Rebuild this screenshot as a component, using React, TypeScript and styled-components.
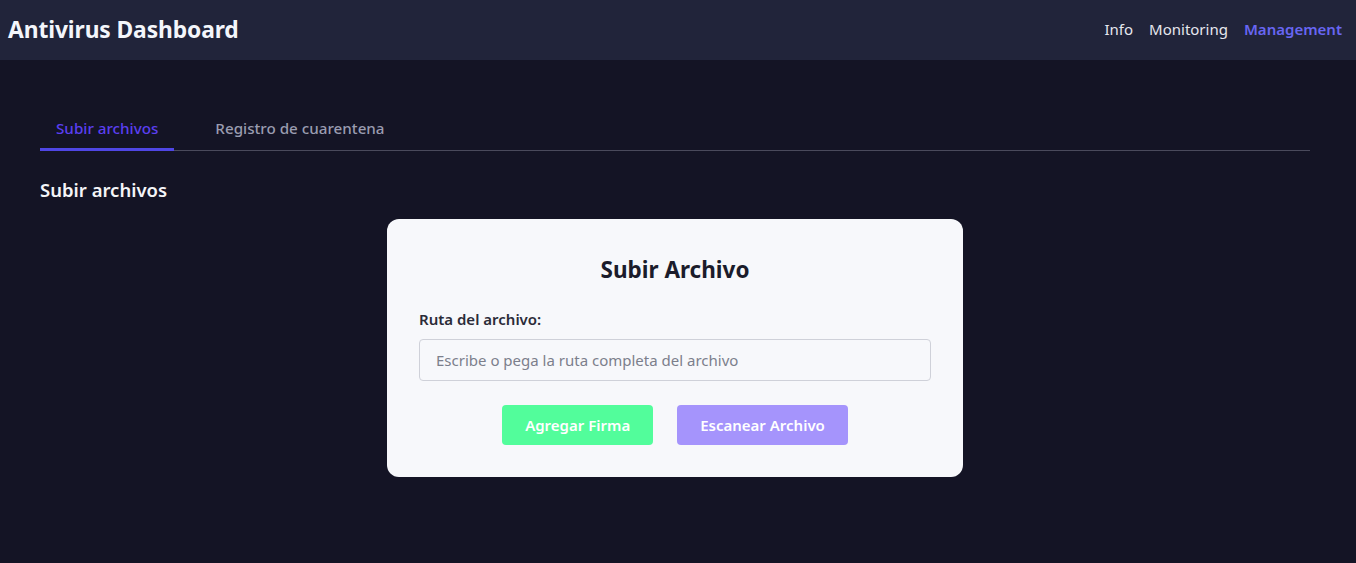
import React, { useState } from "react";
import styled, { createGlobalStyle } from "styled-components";

const Global = createGlobalStyle`
  html, body { margin: 0; padding: 0; background: #141425; }
  body { font-family: "Noto Sans", "Open Sans", sans-serif; color: #f1f2f6; }
  * { box-sizing: border-box; }
`;

const Page = styled.div`
  min-height: 563px;
  background: #141425;
`;

const Header = styled.header`
  height: 60px;
  background: #21243a;
  display: flex;
  align-items: center;
  justify-content: space-between;
  padding: 0 14px 2px 8px;
`;

const Brand = styled.h1`
  margin: 0;
  font-size: 22.8px;
  font-weight: 700;
  color: #f4f6fb;
  letter-spacing: -0.1px;
`;

const Nav = styled.nav`
  display: flex;
  gap: 16px;
`;

const NavLink = styled.a<{ $active?: boolean }>`
  font-size: 15px;
  color: ${(p) => (p.$active ? "#6866f2" : "#e6e7ee")};
  font-weight: ${(p) => (p.$active ? 600 : 400)};
  text-decoration: none;
  cursor: pointer;
`;

const Main = styled.main`
  padding: 56px 46px 0 40px;
`;

const TabList = styled.div`
  display: flex;
  gap: 25px;
  border-bottom: 1px solid #4a4a5c;
`;

const Tab = styled.button<{ $active?: boolean }>`
  background: none;
  border: none;
  font-family: inherit;
  font-size: 15.2px;
  font-weight: 500;
  padding: 2px 16px 10px;
  margin-bottom: -1px;
  cursor: pointer;
  color: ${(p) => (p.$active ? "#5b3ff0" : "#9a9cb0")};
  border-bottom: 3px solid ${(p) => (p.$active ? "#4f46e5" : "transparent")};
`;

const SectionTitle = styled.h2`
  margin: 26px 0 17px;
  font-size: 18.5px;
  font-weight: 600;
  color: #f4f5f8;
`;

const Center = styled.div`
  display: flex;
  justify-content: center;
`;

const Card = styled.div`
  width: 576px;
  background: #f7f8fb;
  border-radius: 12px;
  padding: 36px 32px 32px;
  display: flex;
  flex-direction: column;
`;

const CardTitle = styled.h3`
  margin: 0 0 24px;
  text-align: center;
  font-size: 22.5px;
  font-weight: 700;
  color: #1b1c2b;
  line-height: 30px;
`;

const Label = styled.label`
  font-size: 15px;
  font-weight: 600;
  color: #2a2b38;
  margin-bottom: 10px;
`;

const Input = styled.input`
  height: 42px;
  width: 100%;
  border: 1px solid #cfd1d9;
  border-radius: 4px;
  background: #f7f8fb;
  padding: 0 16px;
  font-family: inherit;
  font-size: 15px;
  color: #333;
  &::placeholder { color: #7c7f8c; }
  &:focus { outline: none; }
`;

const Actions = styled.div`
  display: flex;
  justify-content: center;
  gap: 24px;
  margin-top: 24px;
`;

const Button = styled.button<{ $color: string }>`
  height: 40px;
  padding: 0 23px;
  border: none;
  border-radius: 4px;
  background: ${(p) => p.$color};
  color: #ffffff;
  font-family: inherit;
  font-size: 15px;
  font-weight: 600;
  cursor: pointer;
`;

export default function App() {
  const [tab, setTab] = useState(0);
  return (
    <Page>
      <Global />
      <Header>
        <Brand>Antivirus Dashboard</Brand>
        <Nav>
          <NavLink>Info</NavLink>
          <NavLink>Monitoring</NavLink>
          <NavLink $active>Management</NavLink>
        </Nav>
      </Header>
      <Main>
        <TabList>
          <Tab $active={tab === 0} onClick={() => setTab(0)}>Subir archivos</Tab>
          <Tab $active={tab === 1} onClick={() => setTab(1)}>Registro de cuarentena</Tab>
        </TabList>
        <SectionTitle>Subir archivos</SectionTitle>
        <Center>
          <Card>
            <CardTitle>Subir Archivo</CardTitle>
            <Label>Ruta del archivo:</Label>
            <Input placeholder="Escribe o pega la ruta completa del archivo" />
            <Actions>
              <Button $color="#52fd9b">Agregar Firma</Button>
              <Button $color="#a594fc">Escanear Archivo</Button>
            </Actions>
          </Card>
        </Center>
      </Main>
    </Page>
  );
}
